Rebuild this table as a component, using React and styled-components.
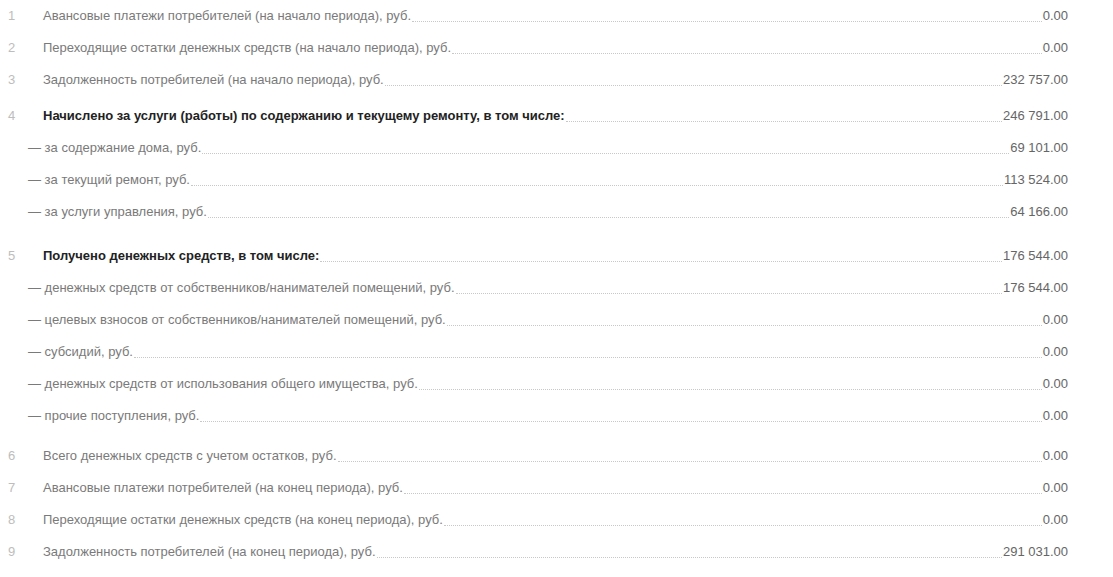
import React from "react";
import styled, { createGlobalStyle } from "styled-components";

const Global = createGlobalStyle`
  html, body { margin: 0; padding: 0; background: #fff; }
  body { font-family: "Liberation Sans", Arial, sans-serif; font-size: 13px; }
`;

const Report = styled.div`
  display: flex;
  flex-direction: column;
  padding: 0 45px 0 0;
  width: 1113px;
  box-sizing: border-box;
`;

const Group = styled.div`
  display: flex;
  flex-direction: column;
  margin-top: ${(p) => p.$gap || 0}px;
`;

const Row = styled.div`
  display: flex;
  align-items: baseline;
  height: 32px;
  line-height: 32px;
  padding-left: ${(p) => (p.$sub ? 28 : 8)}px;
  color: #7a7a7a;
`;

const Num = styled.span`
  width: 35px;
  flex: none;
  color: #bdbdbd;
`;

const Label = styled.span`
  flex: none;
  color: ${(p) => (p.$bold ? "#222" : "#7a7a7a")};
  font-weight: ${(p) => (p.$bold ? "bold" : "normal")};
`;

const Leader = styled.span`
  flex: 1;
  align-self: flex-end;
  height: 0;
  margin: 0 1px 10px 1px;
  border-bottom: 1px dotted #c8c8c8;
`;

const Value = styled.span`
  flex: none;
  color: #666;
`;

const groups = [
  {
    gap: 0,
    rows: [
      { n: 1, t: "Авансовые платежи потребителей (на начало периода), руб.", v: "0.00" },
      { n: 2, t: "Переходящие остатки денежных средств (на начало периода), руб.", v: "0.00" },
      { n: 3, t: "Задолженность потребителей (на начало периода), руб.", v: "232 757.00" },
    ],
  },
  {
    gap: 4,
    rows: [
      { n: 4, t: "Начислено за услуги (работы) по содержанию и текущему ремонту, в том числе:", v: "246 791.00", b: true },
      { sub: true, t: "— за содержание дома, руб.", v: "69 101.00" },
      { sub: true, t: "— за текущий ремонт, руб.", v: "113 524.00" },
      { sub: true, t: "— за услуги управления, руб.", v: "64 166.00" },
    ],
  },
  {
    gap: 12,
    rows: [
      { n: 5, t: "Получено денежных средств, в том числе:", v: "176 544.00", b: true },
      { sub: true, t: "— денежных средств от собственников/нанимателей помещений, руб.", v: "176 544.00" },
      { sub: true, t: "— целевых взносов от собственников/нанимателей помещений, руб.", v: "0.00" },
      { sub: true, t: "— субсидий, руб.", v: "0.00" },
      { sub: true, t: "— денежных средств от использования общего имущества, руб.", v: "0.00" },
      { sub: true, t: "— прочие поступления, руб.", v: "0.00" },
    ],
  },
  {
    gap: 8,
    rows: [
      { n: 6, t: "Всего денежных средств с учетом остатков, руб.", v: "0.00" },
      { n: 7, t: "Авансовые платежи потребителей (на конец периода), руб.", v: "0.00" },
      { n: 8, t: "Переходящие остатки денежных средств (на конец периода), руб.", v: "0.00" },
      { n: 9, t: "Задолженность потребителей (на конец периода), руб.", v: "291 031.00" },
    ],
  },
];

export default function App() {
  return (
    <>
      <Global />
      <Report>
        {groups.map((g, gi) => (
          <Group key={gi} $gap={g.gap}>
            {g.rows.map((r, ri) => (
              <Row key={ri} $sub={r.sub}>
                {!r.sub && <Num>{r.n}</Num>}
                <Label $bold={r.b}>{r.t}</Label>
                <Leader />
                <Value>{r.v}</Value>
              </Row>
            ))}
          </Group>
        ))}
      </Report>
    </>
  );
}
